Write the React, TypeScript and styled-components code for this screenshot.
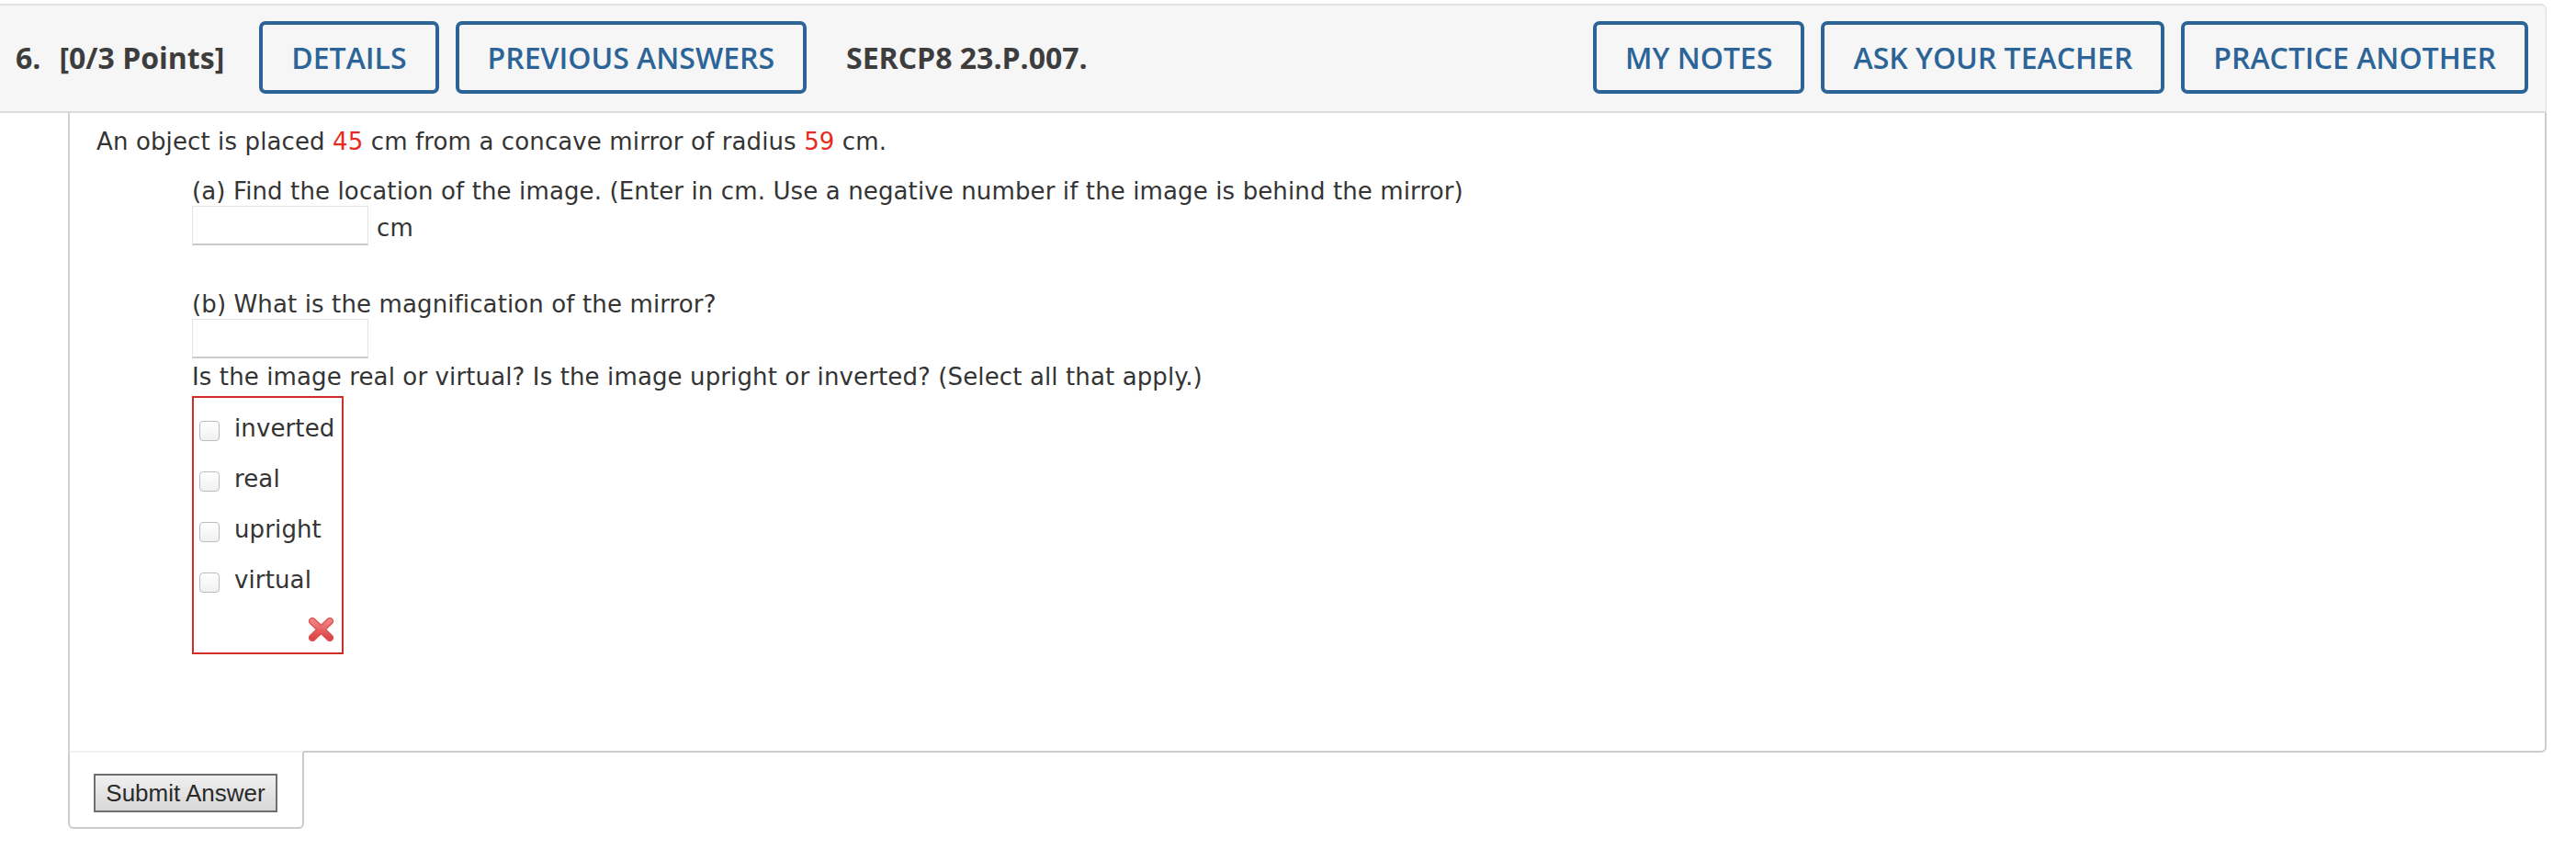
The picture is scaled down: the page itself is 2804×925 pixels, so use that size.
import React from "react";
import styled, { createGlobalStyle } from "styled-components";

const Global = createGlobalStyle`
  html, body { margin: 0; padding: 0; background: #ffffff; }
  body { font-family: "DejaVu Sans", Verdana, sans-serif; color: #333333; }
  * { box-sizing: border-box; }
`;

const Page = styled.div`
  width: 2772px;
  padding-top: 4px;
  display: flex;
  flex-direction: column;
`;

const Header = styled.div`
  display: flex;
  align-items: center;
  background: #f6f6f6;
  border-top: 2px solid #e3e3e3;
  border-right: 1px solid #dddddd;
  border-bottom: 2px solid #dcdcdc;
  border-top-right-radius: 6px;
  padding: 17px 19px 19px 17px;
  font-family: "Open Sans", sans-serif;
`;

const HeaderText = styled.span<{ $gapRight: number }>`
  font-size: 32px;
  font-weight: 700;
  color: #3d3d3d;
  white-space: nowrap;
  margin-right: ${(p) => p.$gapRight}px;
`;

const HeaderButton = styled.button`
  height: 79px;
  padding: 0 31px;
  border: 4px solid #2c6497;
  border-radius: 7px;
  background: transparent;
  color: #2c6497;
  font-family: "Open Sans", sans-serif;
  font-size: 32px;
  font-weight: 600;
  line-height: 71px;
  white-space: nowrap;
  cursor: pointer;
`;

const ButtonGroup = styled.div<{ $after: number }>`
  display: flex;
  gap: 18px;
  margin-right: ${(p) => p.$after}px;
`;

const Spacer = styled.div`
  flex: 1;
`;

const Body = styled.div`
  margin-left: 74px;
  border-left: 2px solid #cfcfcf;
  border-right: 2px solid #cccccc;
  border-bottom: 2px solid #cccccc;
  border-bottom-right-radius: 6px;
  padding: 14px 0 105px 0;
  font-size: 26px;
  line-height: 34px;
  letter-spacing: 0.12px;
  color: #343434;
`;

const Stem = styled.div`
  padding-left: 29px;
`;

const Red = styled.span`
  color: #e52a22;
`;

const Parts = styled.div`
  padding-left: 133px;
  display: flex;
  flex-direction: column;
  align-items: flex-start;
`;

const PartLabel = styled.div<{ $mt: number }>`
  margin-top: ${(p) => p.$mt}px;
`;

const AnswerRow = styled.div`
  display: flex;
  align-items: center;
  margin-top: -1px;
`;

const AnswerInput = styled.div`
  width: 192px;
  height: 43px;
  background: #ffffff;
  border: 1px solid #e4e4e4;
  border-bottom: 2px solid #cacaca;
`;

const Unit = styled.span`
  margin-left: 9px;
  padding-top: 5px;
`;

const CheckGroup = styled.div`
  margin-top: 4px;
  width: 165px;
  border: 2px solid #cf2d26;
  padding: 8px 0 12px 6px;
  display: flex;
  flex-direction: column;
`;

const CheckRow = styled.label`
  height: 55px;
  display: flex;
  align-items: center;
`;

const CheckBox = styled.span`
  width: 22px;
  height: 22px;
  border: 1px solid #bdbdbd;
  border-radius: 4px;
  background: linear-gradient(#ffffff, #f0f0f0);
  flex: none;
`;

const CheckLabel = styled.span`
  margin-left: 16px;
  margin-bottom: 6px;
  white-space: nowrap;
`;

const WrongMark = styled.div`
  align-self: flex-end;
  margin: 11px 9px 0 0;
  width: 27px;
  height: 26px;
  display: flex;
`;

const SubmitTab = styled.div`
  margin-left: 74px;
  margin-top: -2px;
  width: 257px;
  background: #ffffff;
  border: 2px solid #cccccc;
  border-top-color: #f0f0f0;
  border-radius: 0 0 6px 6px;
  padding: 23px 0 16px 26px;
`;

const SubmitButton = styled.button`
  width: 200px;
  height: 42px;
  border: 2px solid #6f6f6f;
  background: linear-gradient(#f0f0f0, #d7d7d7);
  color: #2a2a2a;
  font-family: "Liberation Sans", Arial, sans-serif;
  font-size: 26px;
  line-height: 36px;
  padding: 0;
  cursor: pointer;
`;

const XIcon = () => (
  <svg width="27" height="26" viewBox="0 0 27 26">
    <defs>
      <linearGradient id="xg" x1="0" y1="0" x2="0" y2="1">
        <stop offset="0" stopColor="#f28080" />
        <stop offset="1" stopColor="#dc4646" />
      </linearGradient>
    </defs>
    <g strokeLinecap="round">
      <line x1="4" y1="4" x2="23" y2="22" stroke="#dc5052" strokeWidth="8" />
      <line x1="23" y1="4" x2="4" y2="22" stroke="#dc5052" strokeWidth="8" />
      <line x1="4" y1="4" x2="23" y2="22" stroke="url(#xg)" strokeWidth="5.5" />
      <line x1="23" y1="4" x2="4" y2="22" stroke="url(#xg)" strokeWidth="5.5" />
    </g>
  </svg>
);

const options = ["inverted", "real", "upright", "virtual"];

export default function App() {
  return (
    <>
      <Global />
      <Page>
        <Header>
          <HeaderText $gapRight={20}>6.</HeaderText>
          <HeaderText $gapRight={38}>[0/3 Points]</HeaderText>
          <ButtonGroup $after={43}>
            <HeaderButton>DETAILS</HeaderButton>
            <HeaderButton>PREVIOUS ANSWERS</HeaderButton>
          </ButtonGroup>
          <HeaderText $gapRight={0}>SERCP8 23.P.007.</HeaderText>
          <Spacer />
          <ButtonGroup $after={0}>
            <HeaderButton>MY NOTES</HeaderButton>
            <HeaderButton>ASK YOUR TEACHER</HeaderButton>
            <HeaderButton>PRACTICE ANOTHER</HeaderButton>
          </ButtonGroup>
        </Header>
        <Body>
          <Stem>
            An object is placed <Red>45</Red> cm from a concave mirror of radius{" "}
            <Red>59</Red> cm.
          </Stem>
          <Parts>
            <PartLabel $mt={20}>
              (a) Find the location of the image. (Enter in cm. Use a negative number if the image is behind the mirror)
            </PartLabel>
            <AnswerRow>
              <AnswerInput />
              <Unit>cm</Unit>
            </AnswerRow>
            <PartLabel $mt={47}>(b) What is the magnification of the mirror?</PartLabel>
            <AnswerRow>
              <AnswerInput />
            </AnswerRow>
            <PartLabel $mt={3}>
              Is the image real or virtual? Is the image upright or inverted? (Select all that apply.)
            </PartLabel>
            <CheckGroup>
              {options.map((o) => (
                <CheckRow key={o}>
                  <CheckBox />
                  <CheckLabel>{o}</CheckLabel>
                </CheckRow>
              ))}
              <WrongMark>
                <XIcon />
              </WrongMark>
            </CheckGroup>
          </Parts>
        </Body>
        <SubmitTab>
          <SubmitButton>Submit Answer</SubmitButton>
        </SubmitTab>
      </Page>
    </>
  );
}
